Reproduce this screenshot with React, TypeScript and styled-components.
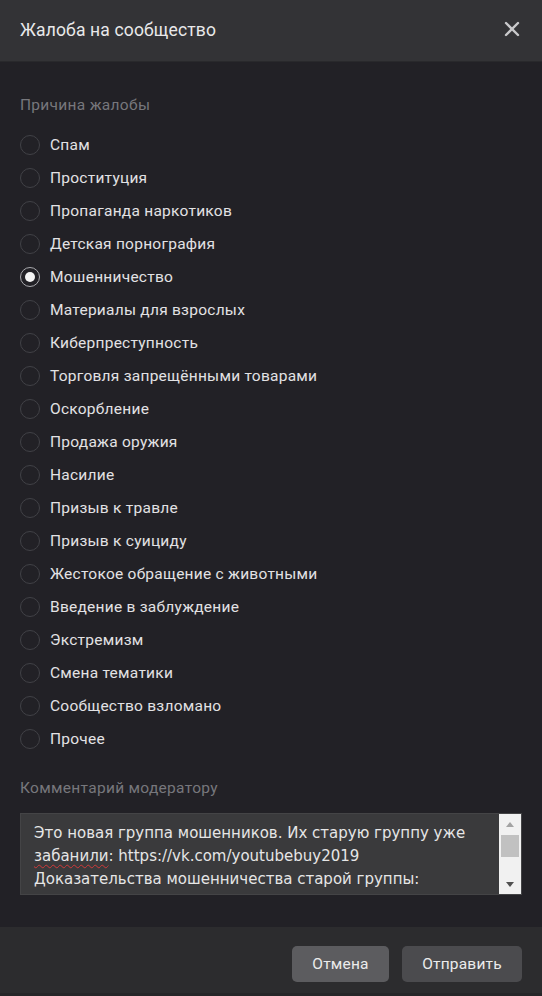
import React from "react";
import styled, { createGlobalStyle } from "styled-components";

const Global = createGlobalStyle`
  html, body { margin: 0; padding: 0; background: #222126; }
  body { font-family: Roboto, "Noto Sans", sans-serif; -webkit-font-smoothing: antialiased; }
  * { box-sizing: border-box; }
`;

const Modal = styled.div`
  width: 542px;
  height: 996px;
  display: flex;
  flex-direction: column;
  background: #222126;
`;

const Header = styled.div`
  height: 62px;
  flex: none;
  display: flex;
  align-items: center;
  justify-content: space-between;
  padding: 0 22px 0 20px;
  background: #333336;
  border-bottom: 1px solid #29292c;
`;

const Title = styled.div`
  font-size: 17.5px;
  letter-spacing: 0.15px;
  color: #e9e9ea;
  line-height: 20px;
  margin-top: -2px;
`;

const CloseBtn = styled.button`
  width: 16px;
  height: 16px;
  padding: 0;
  border: none;
  background: none;
  display: flex;
  margin-top: -4px;
  cursor: pointer;
`;

const Body = styled.div`
  flex: 1;
  display: flex;
  flex-direction: column;
  padding: 33px 20px 0 20px;
`;

const SectionLabel = styled.div<{ $mt?: number }>`
  font-size: 15.5px;
  letter-spacing: 0.3px;
  line-height: 20px;
  color: #77777c;
  margin-top: ${(p) => p.$mt ?? 0}px;
`;

const List = styled.div`
  display: flex;
  flex-direction: column;
  margin-top: 13px;
`;

const Row = styled.label`
  height: 33px;
  display: flex;
  align-items: center;
  gap: 10px;
  cursor: pointer;
`;

const Circle = styled.span<{ $on: boolean }>`
  width: 20px;
  height: 20px;
  flex: none;
  border-radius: 50%;
  border: 1.5px solid ${(p) => (p.$on ? "#a9a9ad" : "#414146")};
  display: flex;
  align-items: center;
  justify-content: center;
  &::after {
    content: "";
    width: 10px;
    height: 10px;
    border-radius: 50%;
    background: #f4f4f4;
    display: ${(p) => (p.$on ? "block" : "none")};
  }
`;

const RowText = styled.span`
  font-size: 15.5px;
  letter-spacing: 0.25px;
  color: #e2e2e4;
  line-height: 20px;
`;

const TextBox = styled.div`
  margin-top: 15px;
  height: 82px;
  display: flex;
  background: #3a3a3c;
  border: 1px solid #444446;
`;

const TextContent = styled.div`
  flex: 1;
  overflow: hidden;
  padding: 8px 4px 0 13px;
  font-family: "DejaVu Sans", Verdana, sans-serif;
  font-size: 15px;
  line-height: 23px;
  color: #e6e6e6;
  white-space: pre;
`;

const Misspelled = styled.span`
  text-decoration: underline wavy #d03a3a;
  text-decoration-thickness: 1px;
  text-underline-offset: 3px;
`;

const Scrollbar = styled.div`
  width: 22px;
  flex: none;
  background: #f1f1f1;
  display: flex;
  flex-direction: column;
  align-items: center;
  padding: 2px 2px;
`;

const ArrowBox = styled.div`
  height: 16px;
  width: 100%;
  display: flex;
  align-items: center;
  justify-content: center;
`;

const Thumb = styled.div`
  width: 100%;
  height: 22px;
  margin-top: 3px;
  background: #c1c1c1;
`;

const Spacer = styled.div`
  flex: 1;
`;

const Footer = styled.div`
  height: 69px;
  flex: none;
  display: flex;
  justify-content: flex-end;
  align-items: flex-start;
  gap: 13px;
  padding: 19px 20px 0 0;
  background: #2c2c2e;
  border-bottom: 3px solid #262628;
`;

const Button = styled.button<{ $w: number; $bg: string }>`
  width: ${(p) => p.$w}px;
  height: 36px;
  border: none;
  border-radius: 5px;
  background: ${(p) => p.$bg};
  color: #ececec;
  font-family: Roboto, sans-serif;
  font-size: 15.5px;
  letter-spacing: 0.2px;
  cursor: pointer;
`;

const reasons = [
  "Спам",
  "Проституция",
  "Пропаганда наркотиков",
  "Детская порнография",
  "Мошенничество",
  "Материалы для взрослых",
  "Киберпреступность",
  "Торговля запрещёнными товарами",
  "Оскорбление",
  "Продажа оружия",
  "Насилие",
  "Призыв к травле",
  "Призыв к суициду",
  "Жестокое обращение с животными",
  "Введение в заблуждение",
  "Экстремизм",
  "Смена тематики",
  "Сообщество взломано",
  "Прочее",
];

export default function App() {
  const selected = "Мошенничество";
  return (
    <>
      <Global />
      <Modal>
        <Header>
          <Title>Жалоба на сообщество</Title>
          <CloseBtn aria-label="Закрыть">
            <svg width="16" height="16" viewBox="0 0 16 16">
              <path d="M2 2 L14 14 M14 2 L2 14" stroke="#c9c9cb" strokeWidth="2.4" strokeLinecap="round" />
            </svg>
          </CloseBtn>
        </Header>
        <Body>
          <SectionLabel>Причина жалобы</SectionLabel>
          <List>
            {reasons.map((r) => (
              <Row key={r}>
                <Circle $on={r === selected} />
                <RowText>{r}</RowText>
              </Row>
            ))}
          </List>
          <SectionLabel $mt={23}>Комментарий модератору</SectionLabel>
          <TextBox>
            <TextContent>
              {"Это новая группа мошенников. Их старую группу уже\n"}
              <Misspelled>забанили</Misspelled>
              {": https://vk.com/youtubebuy2019\nДоказательства мошенничества старой группы:\nhttps://vk.com/topic-180953456_39582611"}
            </TextContent>
            <Scrollbar>
              <ArrowBox>
                <svg width="8" height="5" viewBox="0 0 8 5">
                  <path d="M0 5 L4 0 L8 5 Z" fill="#a3a3a3" />
                </svg>
              </ArrowBox>
              <Thumb />
              <Spacer />
              <ArrowBox>
                <svg width="8" height="5" viewBox="0 0 8 5">
                  <path d="M0 0 L4 5 L8 0 Z" fill="#505050" />
                </svg>
              </ArrowBox>
            </Scrollbar>
          </TextBox>
        </Body>
        <Footer>
          <Button $w={97} $bg="#5c5c5f">Отмена</Button>
          <Button $w={120} $bg="#4b4b4e">Отправить</Button>
        </Footer>
      </Modal>
    </>
  );
}
